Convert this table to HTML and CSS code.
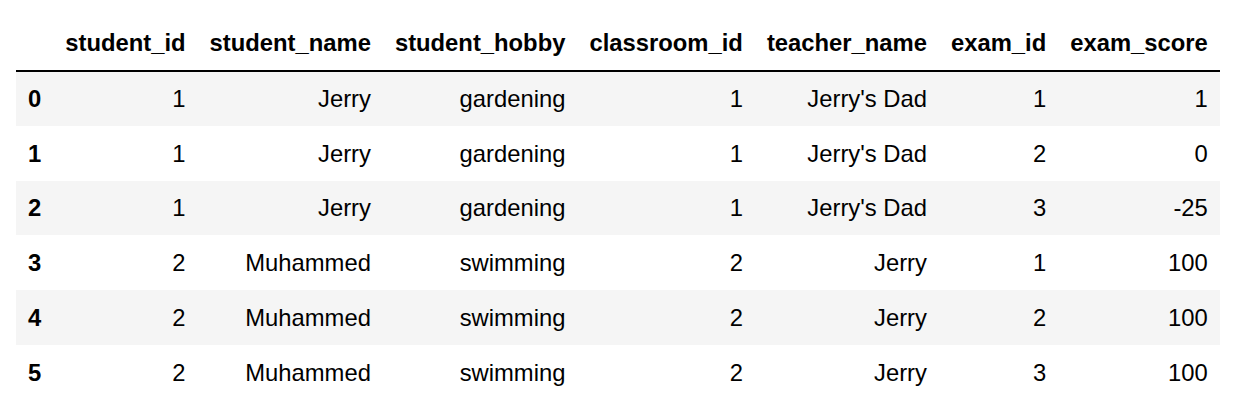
FILE: index.html
```html
<!DOCTYPE html>
<html>
<head>
<meta charset="utf-8">
<link rel="stylesheet" href="styles.css">
</head>
<body>
<table class="dataframe">
  <thead>
    <tr>
      <th></th>
      <th>student_id</th>
      <th>student_name</th>
      <th>student_hobby</th>
      <th>classroom_id</th>
      <th>teacher_name</th>
      <th>exam_id</th>
      <th>exam_score</th>
    </tr>
  </thead>
  <tbody>
    <tr><th>0</th><td>1</td><td>Jerry</td><td>gardening</td><td>1</td><td>Jerry's Dad</td><td>1</td><td>1</td></tr>
    <tr><th>1</th><td>1</td><td>Jerry</td><td>gardening</td><td>1</td><td>Jerry's Dad</td><td>2</td><td>0</td></tr>
    <tr><th>2</th><td>1</td><td>Jerry</td><td>gardening</td><td>1</td><td>Jerry's Dad</td><td>3</td><td>-25</td></tr>
    <tr><th>3</th><td>2</td><td>Muhammed</td><td>swimming</td><td>2</td><td>Jerry</td><td>1</td><td>100</td></tr>
    <tr><th>4</th><td>2</td><td>Muhammed</td><td>swimming</td><td>2</td><td>Jerry</td><td>2</td><td>100</td></tr>
    <tr><th>5</th><td>2</td><td>Muhammed</td><td>swimming</td><td>2</td><td>Jerry</td><td>3</td><td>100</td></tr>
  </tbody>
</table>
</body>
</html>
```
FILE: styles.css
```css
html, body {
  margin: 0;
  background: #ffffff;
}
body {
  padding: 16px;
  font-family: "Liberation Sans", Arial, Helvetica, sans-serif;
  font-size: 23.8px;
  color: #000000;
}
.dataframe {
  border-collapse: collapse;
  border-spacing: 0;
  border: none;
}
.dataframe thead {
  border-bottom: 2px solid #000000;
}
.dataframe thead th {
  height: 54px;
  padding: 0 12px;
  text-align: right;
  font-weight: bold;
  vertical-align: middle;
  white-space: nowrap;
}
.dataframe tbody tr {
  height: 54.75px;
}
.dataframe tbody tr:nth-child(odd) {
  background: #f5f5f5;
}
.dataframe tbody th {
  padding: 1px 12px 0;
  text-align: left;
  font-weight: bold;
  vertical-align: middle;
}
.dataframe tbody td {
  padding: 1px 12px 0;
  text-align: right;
  vertical-align: middle;
  white-space: nowrap;
}
```
